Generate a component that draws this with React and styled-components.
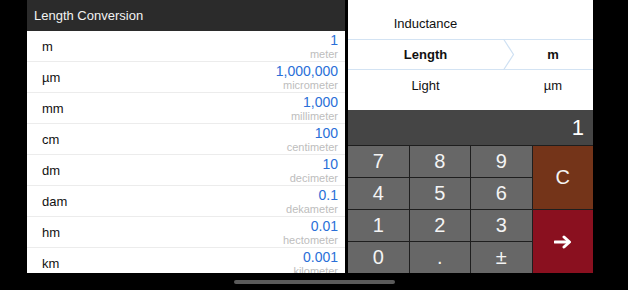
import styled, { createGlobalStyle } from 'styled-components';

const Global = createGlobalStyle`
  html, body { margin: 0; padding: 0; background: #000; }
  body { font-family: "Liberation Sans", Arial, sans-serif; }
`

const Screen = styled.div`
  width: 628px;
  height: 290px;
  background: #000;
  overflow: hidden;
  display: flex;
  flex-direction: column;
`
const Main = styled.div`
  display: flex;
  gap: 3px;
  padding-left: 27px;
  height: 273px;
`
const ListPanel = styled.div`
  width: 318px;
  background: #fff;
  overflow: hidden;
  display: flex;
  flex-direction: column;
`
const Header = styled.div`
  height: 31px;
  flex-shrink: 0;
  background: #2b2b2b;
  color: #f2f2f2;
  font-size: 13px;
  display: flex;
  align-items: center;
  padding-left: 7px;
`
const Row = styled.div`
  height: 30px;
  flex-shrink: 0;
  border-bottom: 1px solid #ececec;
  display: flex;
  align-items: center;
  justify-content: space-between;
  padding: 0 7px 0 15px;
`
const Unit = styled.span`
  font-size: 13px;
  color: #111;
  margin-top: 1px;
`
const Values = styled.div`
  display: flex;
  flex-direction: column;
  align-items: flex-end;
  padding-top: 1px;
`
const Amount = styled.span`
  font-size: 14px;
  line-height: 15px;
  color: #2a6fd8;
`
const Name = styled.span`
  font-size: 11px;
  line-height: 12px;
  color: #bdbdbd;
`
const RightPanel = styled.div`
  width: 245px;
  display: flex;
  flex-direction: column;
`
const Picker = styled.div`
  height: 110px;
  background: #fff;
  display: flex;
  flex-direction: column;
  padding-top: 8px;
  box-sizing: border-box;
`
const PickRow = styled.div`
  position: relative;
  height: ${p => (p.$selected ? 29 : 31)}px;
  display: flex;
  align-items: center;
  font-size: 13px;
  color: #111;
  font-weight: ${p => (p.$selected ? 'bold' : 'normal')};
  border-top: ${p => (p.$selected ? '1px solid #d3e3f3' : 'none')};
  border-bottom: ${p => (p.$selected ? '1px solid #d3e3f3' : 'none')};
`
const Kind = styled.span`
  width: 155px;
  text-align: center;
`
const Sym = styled.span`
  flex: 1;
  text-align: center;
  padding-left: 10px;
`
const Chevron = styled.svg`
  position: absolute;
  left: 155px;
  top: -1px;
`
const Display = styled.div`
  height: 35px;
  background: #454545;
  color: #fff;
  font-size: 22px;
  display: flex;
  align-items: center;
  justify-content: flex-end;
  padding-right: 9px;
`
const Keypad = styled.div`
  flex: 1;
  display: grid;
  grid-template-columns: repeat(4, 1fr);
  grid-template-rows: repeat(4, 1fr);
  gap: 1px;
  background: #1e1e1e;
  padding-top: 1px;
`
const Key = styled.div`
  background: ${p => p.$bg || '#676767'};
  grid-row: ${p => p.$span || 'auto'};
  color: #f4f4f4;
  font-size: 20px;
  display: flex;
  align-items: center;
  justify-content: center;
`
const HomeBar = styled.div`
  width: 161px;
  height: 4px;
  border-radius: 2px;
  background: #5a5a5a;
  margin: 7px 0 0 234px;
`

const rows = [
  ['m', '1', 'meter'],
  ['µm', '1,000,000', 'micrometer'],
  ['mm', '1,000', 'millimeter'],
  ['cm', '100', 'centimeter'],
  ['dm', '10', 'decimeter'],
  ['dam', '0.1', 'dekameter'],
  ['hm', '0.01', 'hectometer'],
  ['km', '0.001', 'kilometer'],
]

const App = () => {
  return (
    <Screen>
      <Global />
      <Main>
        <ListPanel>
          <Header>Length Conversion</Header>
          {rows.map(([u, v, n]) => (
            <Row key={u}>
              <Unit>{u}</Unit>
              <Values>
                <Amount>{v}</Amount>
                <Name>{n}</Name>
              </Values>
            </Row>
          ))}
        </ListPanel>
        <RightPanel>
          <Picker>
            <PickRow>
              <Kind>Inductance</Kind>
              <Sym></Sym>
            </PickRow>
            <PickRow $selected>
              <Kind>Length</Kind>
              <Sym>m</Sym>
              <Chevron width="12" height="31" viewBox="0 0 12 31">
                <path d="M0.5 0 L10.5 15.5 L0.5 31" fill="none" stroke="#cfe1f3" strokeWidth="1.2" />
              </Chevron>
            </PickRow>
            <PickRow>
              <Kind>Light</Kind>
              <Sym>µm</Sym>
            </PickRow>
          </Picker>
          <Display>1</Display>
          <Keypad>
            <Key>7</Key>
            <Key>8</Key>
            <Key>9</Key>
            <Key $bg="#743419" $span="span 2">C</Key>
            <Key>4</Key>
            <Key>5</Key>
            <Key>6</Key>
            <Key>1</Key>
            <Key>2</Key>
            <Key>3</Key>
            <Key $bg="#8a101f" $span="span 2">
              <svg width="18" height="14" viewBox="0 0 18 14">
                <path d="M1 7 H14" stroke="#fff" strokeWidth="3" strokeLinecap="round" />
                <path d="M10 2 L15.5 7 L10 12" fill="none" stroke="#fff" strokeWidth="3" strokeLinecap="round" strokeLinejoin="round" />
              </svg>
            </Key>
            <Key>0</Key>
            <Key>.</Key>
            <Key>±</Key>
          </Keypad>
        </RightPanel>
      </Main>
      <HomeBar />
    </Screen>
  )
}

export default App
